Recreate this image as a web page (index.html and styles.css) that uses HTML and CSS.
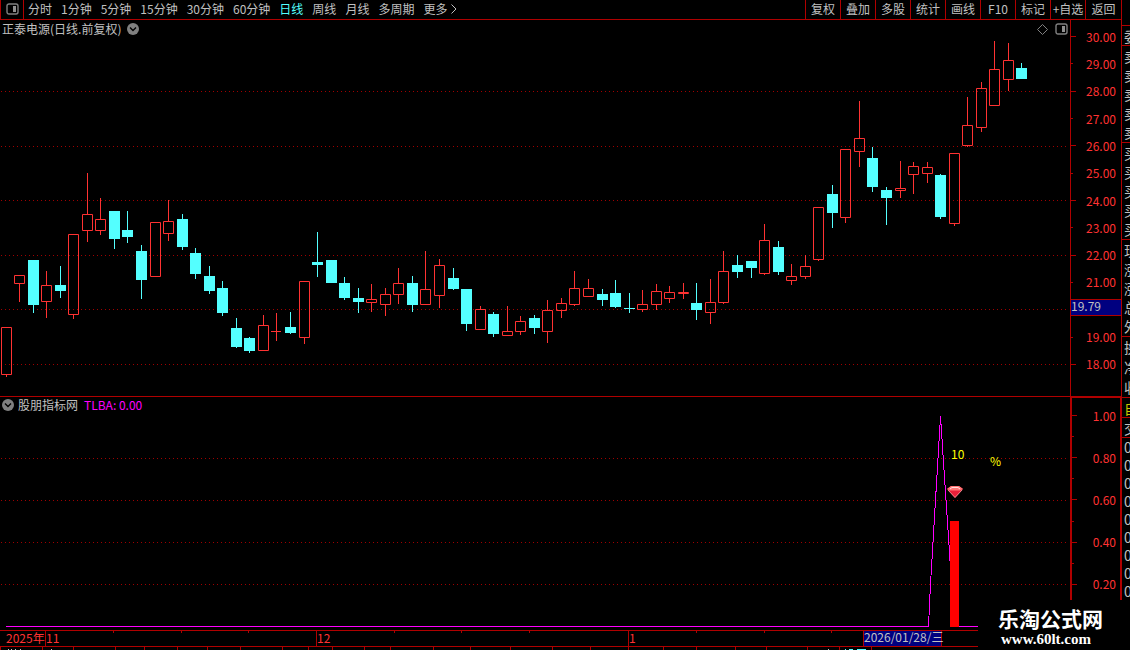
FILE: index.html
```html
<!DOCTYPE html>
<html lang="zh-CN">
<head>
  <meta charset="UTF-8" />
  <meta name="viewport" content="width=device-width, initial-scale=1.0"/>
  <title>正泰电源 日线</title>
  <link rel="stylesheet" href="styles.css">
</head>
<body>
  <main class="main">
    <nav class="toolbar">
      <button class="layout-btn" aria-label="布局">
        <svg width="13" height="12" viewBox="0 0 13 12"><rect x="1" y="1" width="11" height="10" rx="2" fill="none" stroke="#808080" stroke-width="1.4"/><rect x="7" y="3" width="3" height="6" fill="#909090"/></svg>
      </button>
      <div class="periods">
        <button>分时</button>
        <button>1分钟</button>
        <button>5分钟</button>
        <button>15分钟</button>
        <button>30分钟</button>
        <button>60分钟</button>
        <button class="active">日线</button>
        <button>周线</button>
        <button>月线</button>
        <button>多周期</button>
        <button class="more">更多
          <svg width="6" height="10" viewBox="0 0 6 10"><path d="M.5 .5 5 5 .5 9.5" fill="none" stroke="#c0c0c0"/></svg>
        </button>
      </div>
      <div class="tools">
        <button>复权</button>
        <button>叠加</button>
        <button>多股</button>
        <button>统计</button>
        <button>画线</button>
        <button>F10</button>
        <button>标记</button>
        <button>+自选</button>
        <button>返回</button>
      </div>
    </nav>

    <section class="pane price">
      <div class="plot">
        <div class="pane-title">
          <h1>正泰电源(日线.前复权)</h1>
          <button class="round" aria-label="展开">
            <svg width="12" height="12" viewBox="0 0 12 12"><circle cx="6" cy="6" r="6" fill="#808080"/><path d="M3 4.5 6 7.5 9 4.5" fill="none" stroke="#000" stroke-width="1.4"/></svg>
          </button>
          <div class="pane-icons">
            <svg width="11" height="11" viewBox="0 0 11 11"><path d="M5.5 .5 10.500 5.500 5.500 10.500 .5 5.500Z" fill="none" stroke="#808080"/></svg>
            <svg width="13" height="12" viewBox="0 0 13 12"><rect x="1" y="1" width="11" height="10" rx="2" fill="none" stroke="#808080" stroke-width="1.4"/><rect x="7" y="3" width="3" height="6" fill="#909090"/></svg>
          </div>
        </div>
        <svg class="chart" id="priceChart" viewBox="0 40 1070 356"></svg>
      </div>
      <div class="axis">
        <span>30.00</span>
        <span>29.00</span>
        <span>28.00</span>
        <span>27.00</span>
        <span>26.00</span>
        <span>25.00</span>
        <span>24.00</span>
        <span>23.00</span>
        <span>22.00</span>
        <span>21.00</span>
        <span></span>
        <span>19.00</span>
        <span>18.00</span>
        <b class="cursor-price">19.79</b>
      </div>
    </section>

    <section class="pane indicator">
      <div class="plot">
        <div class="pane-title">
          <button class="round" aria-label="展开">
            <svg width="12" height="12" viewBox="0 0 12 12"><circle cx="6" cy="6" r="6" fill="#808080"/><path d="M3 4.500 6 7.500 9 4.500" fill="none" stroke="#000" stroke-width="1.4"/></svg>
          </button>
          <h2>股朋指标网</h2>
          <span class="value">TLBA: 0.00</span>
        </div>
        <svg class="chart" viewBox="0 416 1070 214">
          <g class="grid">
            <path d="M1 458.500H1067M1 500.500H1067M1 542.500H1067M1 584.500H1067"/>
          </g>
          <path class="tlba" d="M6 626.500H928.500L930.500 584L940.500 416.500L950.500 568V626.500H1000"/>
          <rect x="950" y="521" width="9" height="106" fill="#f00"/>
          <g>
            <path d="M947 489 951 486H959L963 489 955 498Z" fill="#e8203a"/>
            <path d="M947 489 951 486H959L963 489 960 490.500H950Z" fill="#f77"/>
            <path d="M950 489 952 487.500H958L960 489" fill="none" stroke="#fdd"/>
            <path d="M948 490 955 497.500 962 490" fill="none" stroke="#f9a0a0" stroke-width=".8"/>
          </g>
          <text class="signal" x="951" y="459">10</text>
          <text class="signal" x="990" y="466">%</text>
        </svg>
      </div>
      <div class="axis">
        <span>1.00</span>
        <span></span>
        <span>0.80</span>
        <span></span>
        <span>0.60</span>
        <span></span>
        <span>0.40</span>
        <span></span>
        <span>0.20</span>
      </div>
    </section>

    <svg class="timeline" viewBox="0 630 1121 20" preserveAspectRatio="xMinYMin meet">
      <path class="rule" d="M0 630.500H1121M0 646.500H1121M45.500 631V646M316.500 631V646M628.500 631V646"/>
      <path class="rule" d="M113.500 631v2M181.500 631v2M248.500 631v2M394.500 631v2M461.500 631v2M529.500 631v2M696.500 631v2M764.500 631v2M831.500 631v2"/>
      <path class="rule" d="M.5 647v3M42.500 647v3M73.500 647v3M115.500 647v3M144.500 647v3M177.500 647v3M207.500 647v3M240.500 647v3M282.500 647v3M308.500 647v3M332.500 647v3M364.500 647v3M390.500 647v3M433.500 647v3M470.500 647v3M510.500 647v3M552.500 647v3M590.500 647v3M628.500 647v3M663.500 647v3M696.500 647v3M735.500 647v3M766.500 647v3M807.500 647v3M839.500 647v3M871.500 647v3"/>
      <path d="M8 649.500h1m2 0h1m3 0h1m4 0h1m30 0h1M828 649.500h1" stroke="#c0c0c0"/>
      <path d="M845 649.500h1m3 0h4m4 0h9" stroke="#54ffff"/>
      <text x="6" y="643">2025年</text>
      <text x="46" y="643">11</text>
      <text x="317" y="643">12</text>
      <text x="629" y="643">1</text>
      <rect class="date-tag" x="863.500" y="630.500" width="78" height="16"/>
      <text class="date" x="864" y="642">2026/01/28/三</text>
    </svg>
  </main>

  <aside class="side">
    <div class="group head"></div>
    <div class="group one"><span>委</span></div>
    <div class="group five"><span>卖</span><span>卖</span><span>卖</span><span>卖</span><span>卖</span></div>
    <div class="group five"><span>买</span><span>买</span><span>买</span><span>买</span><span>买</span></div>
    <div class="group five"><span>现</span><span>涨</span><span>涨</span><span>总</span><span>外</span></div>
    <div class="group three"><span>换</span><span>净</span><span>收</span></div>
    <div class="group one self"><span>自</span></div>
    <div class="group one"><span>交</span></div>
    <div class="trades"><span>0</span><span>0</span><span>0</span><span>0</span><span>0</span><span>0</span><span>0</span><span>0</span><span>0</span></div>
  </aside>

  <div class="watermark">
    <strong>乐淘公式网</strong>
    <a href="#">www.60lt.com</a>
  </div>

  <script src="chart.js"></script>
</body>
</html>
```

FILE: styles.css
```css
* {
  box-sizing: border-box;
}

body {
  margin: 0;
  height: 100vh;
  display: flex;
  position: relative;
  overflow: hidden;
  background: #000;
  color: #c0c0c0;
  font-family: "Noto Sans CJK SC", sans-serif;
  font-size: 12px;
  line-height: 18px;
}

button {
  padding: 0;
  border: none;
  background: none;
  color: inherit;
  font: inherit;
  white-space: nowrap;
  cursor: pointer;
}

svg {
  display: block;
}

h1, h2 {
  margin: 0;
  font-size: 12px;
  font-weight: normal;
}

.main {
  flex: 1;
  min-width: 0;
  display: flex;
  flex-direction: column;
}

/* toolbar */
.toolbar {
  display: flex;
  height: 20px;
  border-bottom: 1px solid #b00000;
}

.toolbar button {
  padding-bottom: 2px;
}

.layout-btn {
  display: flex;
  align-items: center;
  justify-content: center;
  width: 24px;
  border-left: 1px solid #b00000;
  border-right: 1px solid #b00000;
}

.periods {
  display: flex;
  gap: 9px;
  padding-left: 4px;
}

.periods .active {
  color: #54ffff;
}

.more {
  display: flex;
  align-items: center;
  gap: 4px;
}

.tools {
  display: flex;
  margin-left: auto;
}

.tools button {
  width: 35px;
  border-left: 1px solid #b00000;
}

.tools button:last-child {
  width: 36px;
}

/* panes */
.pane {
  display: flex;
  border-bottom: 1px solid #b00000;
}

.price {
  flex: 1;
  min-height: 0;
}

.indicator {
  height: 233px;
  border-bottom: none;
}

.plot {
  flex: 1;
  min-width: 0;
  display: flex;
  flex-direction: column;
}

.pane-title {
  display: flex;
  align-items: center;
  gap: 6px;
  height: 20px;
  padding: 0 2px 2px;
}

.indicator .pane-title {
  height: 19px;
  gap: 4px;
  padding-bottom: 3px;
}

.indicator .value {
  margin-left: 2px;
  color: #f0f;
}

.pane-icons {
  display: flex;
  align-items: center;
  gap: 7px;
  margin-left: auto;
}

.chart {
  flex: 1;
  width: 100%;
  min-height: 0;
}

.grid path {
  stroke: #a00000;
  stroke-dasharray: 1 3;
  fill: none;
}

.up {
  fill: none;
  stroke: #ff3232;
}

.down {
  fill: #54ffff;
}

.down-wick {
  stroke: #54ffff;
}

.tlba {
  fill: none;
  stroke: #f0f;
  shape-rendering: crispEdges;
}

.signal {
  fill: #ff0;
}

/* value axes */
.axis {
  position: relative;
  display: flex;
  flex-direction: column;
  width: 51px;
  padding: 3px 0 18px;
  border-left: 1px solid #b00000;
  color: #ff3232;
}

.axis span {
  flex: 1;
  display: flex;
  align-items: center;
  justify-content: space-between;
  padding-right: 5px;
  line-height: 18px;
}

.axis span::before {
  content: "";
  width: 5px;
  height: 1px;
  background: #b00000;
}

.axis span:nth-child(even)::before {
  width: 2px;
}

.indicator .axis {
  padding: 7px 0 35px;
  border: 1px solid #b00000;
  border-left-width: 2px;
  border-bottom: none;
}

.indicator .axis span {
  padding-right: 4px;
}

.cursor-price {
  position: absolute;
  left: 0;
  right: 0;
  top: 279px;
  height: 17px;
  border: 1px solid #b00000;
  border-width: 1px 0;
  background: #000080;
  color: #c0c0c0;
  font-weight: normal;
  line-height: 12px;
}

/* time axis */
.timeline {
  width: 100%;
  height: 20px;
  overflow: visible;
}

.rule {
  stroke: #b00000;
}

.timeline text {
  fill: #ff3232;
}

.date-tag {
  fill: #000080;
  stroke: #b00000;
}

.timeline .date {
  fill: #c0c0c0;
}

/* quote panel */
.side {
  width: 9px;
  overflow: hidden;
  border-left: 1px solid #b00000;
}

.group {
  display: flex;
  flex-direction: column;
  justify-content: space-around;
  padding-left: 2px;
  border-bottom: 1px solid #b00000;
  font-size: 14px;
}

.group span {
  width: 14px;
  line-height: 18px;
}

.head {
  height: 26px;
}

.one {
  height: 20px;
}

.five {
  height: 97px;
}

.three {
  height: 61px;
}

.self {
  color: #c8c800;
}

.trades {
  display: flex;
  flex-direction: column;
  padding-left: 2px;
  font-size: 14px;
}

.watermark {
  position: absolute;
  right: 0;
  bottom: 0;
  display: flex;
  flex-direction: column;
  width: 152px;
  height: 50px;
  padding: 6px 0 0 20px;
  background: #000;
  color: #fff;
}

.watermark strong {
  font-size: 21px;
  line-height: 24px;
}

.watermark a {
  padding-left: 3px;
  color: #fff;
  font: bold 15px/18px "Liberation Serif", serif;
  text-decoration: none;
}
```

FILE: chart.js
```js
// left, high, body top, body bottom, low, 1 = up / 0 = down
const candles = [
  [1, 327, 327, 375, 377, 1], [14, 275, 275, 284, 302, 1], [28, 260, 260, 305, 313, 0],
  [41, 271, 285, 302, 318, 1], [55, 266, 285, 291, 298, 0], [68, 234, 234, 315, 319, 1],
  [82, 173, 214, 231, 242, 1], [95, 198, 219, 231, 235, 1], [109, 211, 211, 239, 249, 0],
  [122, 211, 230, 237, 243, 0], [136, 245, 251, 280, 299, 0], [150, 222, 222, 277, 277, 1],
  [163, 200, 221, 234, 241, 1], [177, 214, 219, 247, 250, 0], [190, 248, 253, 274, 279, 0],
  [204, 266, 276, 291, 294, 0], [217, 281, 288, 313, 316, 0], [231, 318, 328, 347, 348, 0],
  [244, 337, 338, 351, 353, 0], [258, 315, 325, 351, 351, 1], [271, 313, 331, 332, 341, 1],
  [285, 312, 327, 333, 334, 0], [299, 281, 281, 338, 344, 1], [312, 232, 262, 265, 277, 0],
  [326, 260, 260, 283, 283, 0], [339, 277, 283, 298, 300, 0], [353, 288, 298, 302, 313, 0],
  [366, 284, 299, 303, 312, 1], [380, 288, 294, 305, 316, 1], [393, 268, 283, 295, 304, 1],
  [407, 276, 283, 305, 312, 0], [420, 251, 289, 305, 305, 1], [434, 259, 265, 296, 308, 1],
  [448, 268, 278, 289, 290, 0], [461, 289, 289, 324, 331, 0], [475, 306, 309, 330, 330, 1],
  [488, 312, 314, 334, 337, 0], [502, 306, 331, 336, 336, 1], [515, 316, 321, 332, 335, 1],
  [529, 315, 318, 328, 334, 0], [542, 300, 310, 332, 343, 1], [556, 298, 303, 311, 318, 1],
  [569, 271, 288, 305, 306, 1], [583, 279, 288, 297, 297, 1], [597, 289, 294, 300, 306, 0],
  [610, 280, 293, 307, 308, 0], [624, 293, 308, 309, 313, 0], [637, 290, 304, 310, 312, 1],
  [651, 284, 291, 305, 310, 1], [664, 286, 292, 299, 303, 1], [678, 283, 292, 294, 299, 1],
  [691, 283, 303, 310, 320, 0], [705, 279, 302, 313, 324, 1], [718, 251, 271, 303, 304, 1],
  [732, 255, 265, 272, 278, 0], [746, 261, 261, 268, 278, 0], [759, 224, 240, 274, 275, 1],
  [773, 241, 247, 272, 275, 0], [786, 264, 276, 281, 285, 1], [800, 255, 266, 277, 279, 1],
  [813, 207, 207, 260, 261, 1], [827, 185, 194, 213, 228, 0], [840, 149, 149, 218, 223, 1],
  [854, 101, 138, 152, 167, 1], [867, 147, 158, 187, 192, 0], [881, 187, 190, 198, 225, 0],
  [895, 161, 188, 191, 198, 1], [908, 162, 166, 175, 194, 1], [922, 162, 167, 174, 183, 1],
  [935, 174, 175, 217, 219, 0], [949, 153, 153, 224, 226, 1], [962, 97, 125, 146, 147, 1],
  [976, 82, 88, 128, 132, 1], [989, 41, 69, 106, 106, 1], [1003, 43, 60, 80, 91, 1],
  [1016, 63, 68, 79, 79, 0]
];

const gridRows = [91, 146, 200, 255, 309, 364];

function drawPrice() {
  let out = '<g class="grid">';
  gridRows.forEach(y => {
    out += `<path d="M1 ${y + 0.5}H1067"/>`;
  });
  out += "</g>";

  candles.forEach(([x, high, top, bottom, low, up]) => {
    const mid = x + 5.5;
    if (up) {
      const body = bottom - top > 1
        ? `M${x + 0.5} ${top + 0.5}h10V${bottom - 0.5}h-10Z`
        : `M${x} ${top + 0.5}h10`;
      out += `<path class="up" d="${body}M${mid} ${high}V${top}M${mid} ${bottom}V${low}"/>`;
    } else {
      out += `<path class="down-wick" d="M${mid} ${high}V${low}"/>`;
      out += `<rect class="down" x="${x}" y="${top}" width="11" height="${bottom - top}"/>`;
    }
  });

  document.getElementById("priceChart").innerHTML = out;
}

drawPrice();
```
